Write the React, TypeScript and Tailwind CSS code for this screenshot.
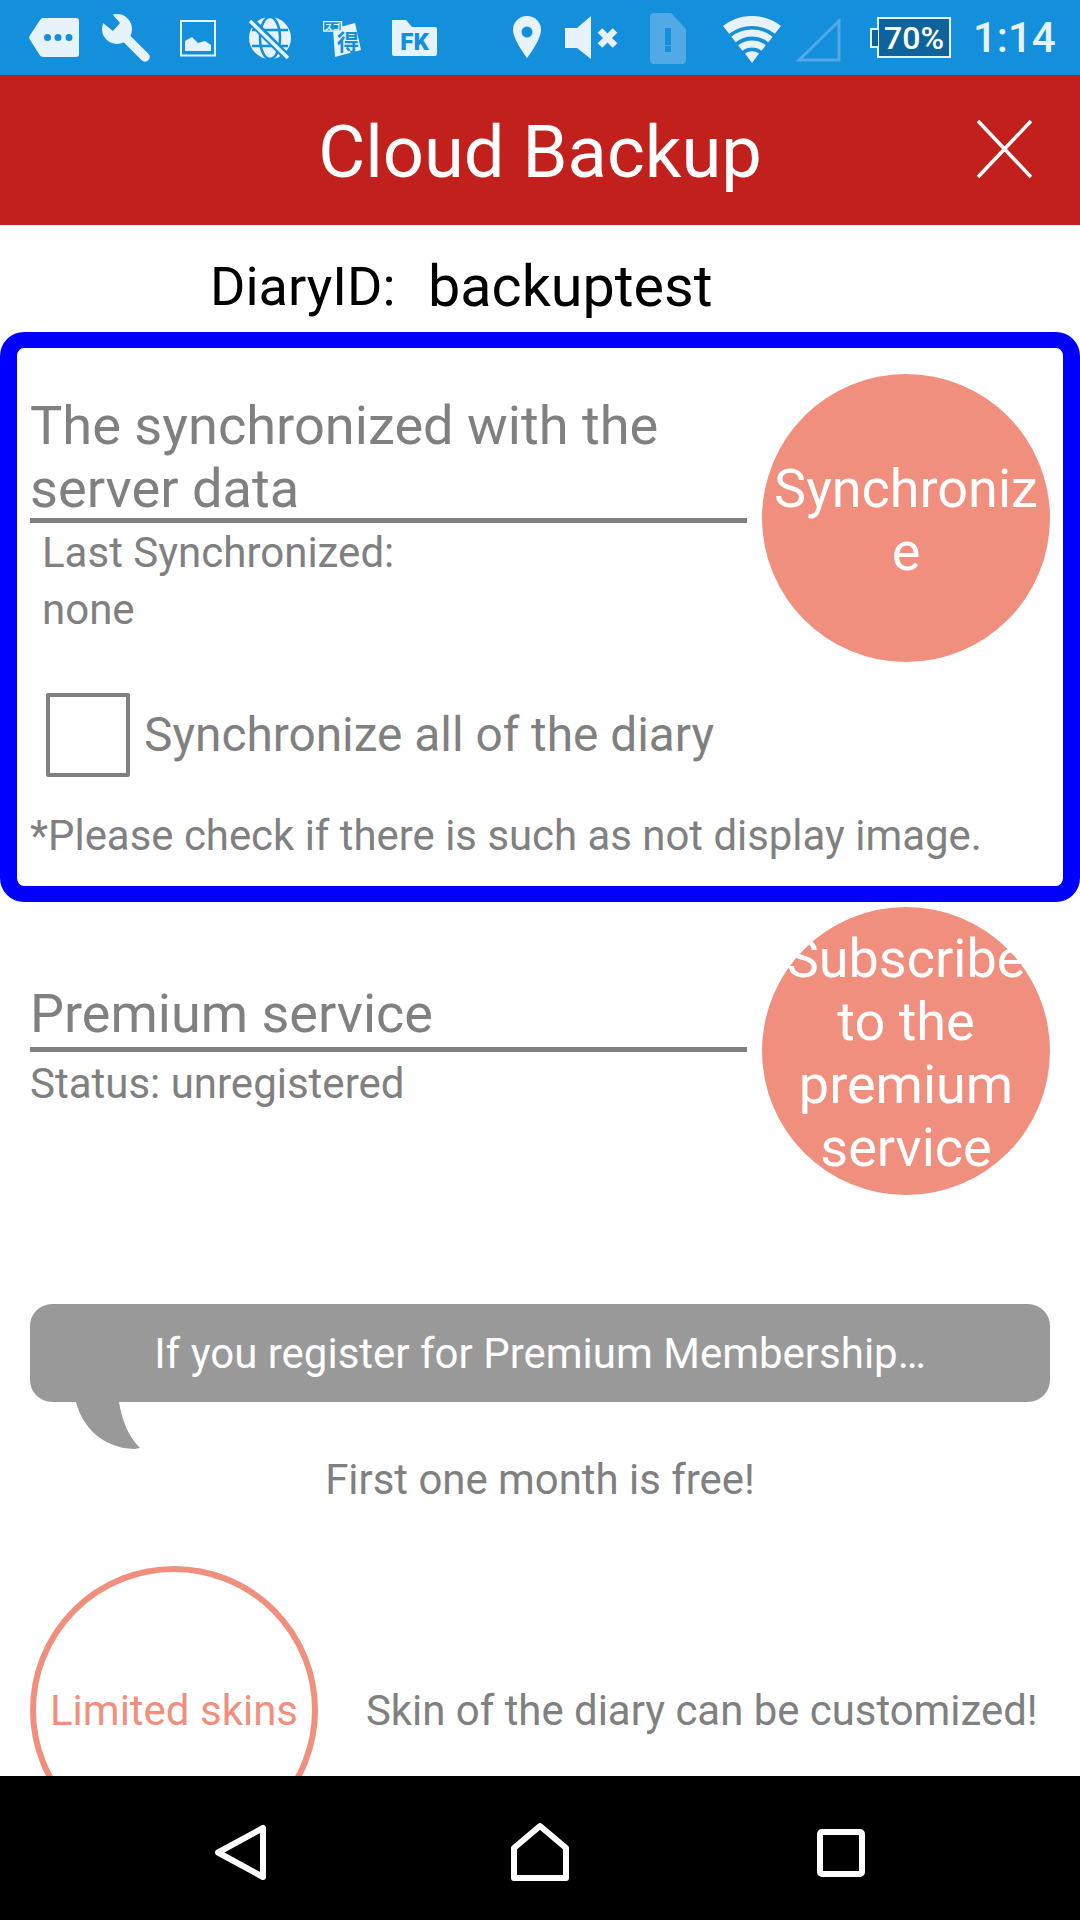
const ICON = "#e6f3fb";
const BAR = "#148fdc";
const DIM = "#52a9e5";

function StatusBar() {
  return (
    <div className="h-[75px] shrink-0 bg-[#148fdc] flex items-start relative">
      <svg className="w-[50px] h-[39px] ml-[29px] mt-[18px]" viewBox="29 18 50 39">
        <path fill={ICON} d="M43 18H76a3 3 0 0 1 3 3V54a3 3 0 0 1-3 3H43a4 4 0 0 1-3-1.500L29.500 39q-.5-1.500 0-3L40 20a4 4 0 0 1 3-2z" />
        <circle cx="47.500" cy="37.500" r="3.500" fill={BAR} />
        <circle cx="58" cy="37.500" r="3.500" fill={BAR} />
        <circle cx="69" cy="37.500" r="3.500" fill={BAR} />
      </svg>
      <svg className="w-[48px] h-[48px] ml-[23px] mt-[14px]" viewBox="102 14 48 48">
        <circle cx="117" cy="29" r="15" fill={ICON} />
        <path d="M124 36L145 57" stroke={ICON} strokeWidth="9.500" strokeLinecap="round" />
        <path fill={BAR} d="M108 9L120 23L113 31L99 20z" />
      </svg>
      <svg className="w-[36px] h-[37px] ml-[30px] mt-[20px]" viewBox="180 20 36 37">
        <rect x="181" y="21" width="34" height="34.500" fill="none" stroke={ICON} strokeWidth="2" />
        <path fill={ICON} d="M185 51V41L192 37L198 43L205 41L211 45V51z" />
      </svg>
      <svg className="w-[44px] h-[44px] ml-[33px] mt-[16px]" viewBox="249 16 44 44">
        <circle cx="270" cy="38" r="21" fill={ICON} />
        <g fill="none" stroke={BAR} strokeWidth="2.500">
          <ellipse cx="270" cy="38" rx="10" ry="21" />
          <path d="M252 30H288M252 46H288" />
        </g>
        <path d="M250 20L288 58" stroke={BAR} strokeWidth="8" />
        <path d="M250 21L288 58" stroke={ICON} strokeWidth="3.500" />
      </svg>
      <svg className="w-[39px] h-[37px] ml-[30px] mt-[21px]" viewBox="323 21 39 37">
        <path fill={ICON} d="M333 29L355 23L361 50L335 57z" />
        <rect x="323.500" y="21.500" width="18" height="9.500" fill={BAR} stroke={ICON} strokeWidth="1.500" />
        <text x="332.500" y="29.500" textAnchor="middle" fontSize="8" fontWeight="700" fill={ICON} fontFamily="'Noto Sans CJK JP', sans-serif">スゴ</text>
        <text x="348" y="50" textAnchor="middle" fontSize="22" fontWeight="700" fill={BAR} fontFamily="'Noto Sans CJK JP', sans-serif">得</text>
      </svg>
      <svg className="w-[46px] h-[37px] ml-[29px] mt-[20px]" viewBox="391 20 46 37">
        <path fill={ICON} d="M392 20H406L412 27H435a2 2 0 0 1 2 2V54a2 2 0 0 1-2 2H394a2 2 0 0 1-2-2z" />
        <text x="414.500" y="50" textAnchor="middle" fontSize="24" fontWeight="900" fill={BAR} fontFamily="Roboto, sans-serif">FK</text>
      </svg>
      <svg className="w-[28px] h-[43px] ml-[76px] mt-[16px]" viewBox="513 16 28 43">
        <path fill={ICON} d="M527 16a14 14 0 0 0-14 14c0 10 14 28 14 28s14-18 14-28a14 14 0 0 0-14-14z" />
        <circle cx="527" cy="32" r="5.500" fill={BAR} />
      </svg>
      <svg className="w-[53px] h-[44px] ml-[24px] mt-[16px]" viewBox="565 16 53 44">
        <path fill={ICON} d="M565 28H577L591 16V59L577 48H565z" />
        <path d="M600 30.500L615 45.500M615 30.500L600 45.500" stroke={ICON} strokeWidth="6.500" />
      </svg>
      <svg className="w-[36px] h-[51px] ml-[32px] mt-[13px]" viewBox="650 13 36 51">
        <path fill={DIM} d="M654 13H671L686 29V60a4 4 0 0 1-4 4H654a4 4 0 0 1-4-4V17a4 4 0 0 1 4-4z" />
        <path fill={BAR} d="M665 28H671V45H665zM665 46H671V52H665z" />
      </svg>
      <svg className="w-[58px] h-[47px] ml-[37px] mt-[16px]" viewBox="723 16 58 47">
        <g fill="none" stroke={ICON}>
          <path strokeWidth="10" d="M726.100 29.900A42 42 0 0 1 777.900 29.900" />
          <path strokeWidth="7" d="M733.500 39.400A30 30 0 0 1 770.500 39.400" />
          <path strokeWidth="7" d="M740.300 48A19 19 0 0 1 763.700 48" />
        </g>
        <path fill={ICON} d="M752 63L745 53.500A12 12 0 0 1 759 53.500z" />
      </svg>
      <svg className="w-[46px] h-[45px] ml-[14px] mt-[17px]" viewBox="795 17 46 45">
        <path fill="none" stroke={DIM} strokeWidth="3" d="M799 60L839 21V60z" />
      </svg>
      <div className="relative w-[74px] h-[41px] ml-[36px] mt-[17px] border-2 border-[#e6f3fb] bg-[#0e639c] flex items-center justify-center text-[32px] leading-none font-medium text-white font-['Roboto',sans-serif]">
        70%
        <span className="absolute left-[-9px] top-[9px] w-[8px] h-[20px] border-2 border-r-0 border-[#e6f3fb] bg-[#0e639c]" />
      </div>
      <div className="ml-[22px] h-[75px] flex items-center text-[42px] leading-none font-medium text-[#e6f3fb] font-['Roboto',sans-serif]">
        1:14
      </div>
    </div>
  );
}

function Header() {
  return (
    <div className="relative h-[150px] shrink-0 bg-[#c1201c] flex items-center justify-center pt-[7px] text-white text-[72.300px] leading-none">
      Cloud Backup
      <svg className="absolute left-[976px] top-[44px] w-[57px] h-[60px] blur-[0.5px]" viewBox="0 0 57 60">
        <path d="M2 2L55 58M55 2L2 58" stroke="#fff" strokeWidth="3.500" fill="none" />
      </svg>
    </div>
  );
}

function Circle({ children }: { children: React.ReactNode }) {
  return (
    <div className="w-[288px] h-[288px] shrink-0 rounded-full bg-[#f18f7f] flex items-center justify-center pt-[4px] text-center text-white text-[54px] leading-[63px] [overflow-wrap:anywhere]">
      <span className="w-full">{children}</span>
    </div>
  );
}

function NavBar() {
  return (
    <div className="h-[144px] shrink-0 bg-black flex items-start">
      <svg className="w-[56px] h-[62px] ml-[213px] mt-[46px]" viewBox="213 1822 56 62">
        <path d="M263 1828V1877L218 1852.500z" fill="none" stroke="#fff" strokeWidth="6" strokeLinejoin="round" />
      </svg>
      <svg className="w-[64px] h-[64px] ml-[239px] mt-[44px]" viewBox="508 1820 64 64">
        <path d="M540 1826L566 1848V1878H514V1848z" fill="none" stroke="#fff" strokeWidth="6" strokeLinejoin="round" />
      </svg>
      <svg className="w-[48px] h-[48px] ml-[245px] mt-[53px]" viewBox="0 0 48 48">
        <rect x="3" y="3" width="42" height="42" rx="2" fill="none" stroke="#fff" strokeWidth="6" />
      </svg>
    </div>
  );
}

export default function App() {
  return (
    <div className="w-[1080px] h-[1920px] flex flex-col overflow-hidden bg-white font-['Roboto',sans-serif] text-[#808080]">
      <StatusBar />
      <Header />
      <div className="flex-1 min-h-0 overflow-hidden">
        <div className="h-[107px] flex items-center pl-[210px] pt-[16px] text-black text-[54px] leading-none">
          <span className="w-[218px]">DiaryID:</span>
          <span className="text-[57.500px]">backuptest</span>
        </div>

        <div className="h-[570px] border-y-[16px] border-x-[17px] border-[#0000ff] rounded-[24px] pl-[13px] pr-[13px] flex flex-col">
          <div className="flex items-start pt-[26px]">
            <div className="flex-1 mr-[15px]">
              <div className="h-[149px] text-[54.200px] leading-[63px] border-b-[5px] border-[#808080] pt-[20px]">
                The synchronized with the server data
              </div>
              <div className="pl-[12px] text-[42px] leading-[57px] pt-[1px]">
                <div>Last Synchronized:</div>
                <div>none</div>
              </div>
            </div>
            <Circle>Synchronize</Circle>
          </div>
          <div className="flex items-center pl-[16px] mt-[31px]">
            <div className="w-[84px] h-[84px] border-4 border-[#808080] rounded-[2px] blur-[0.5px]" />
            <span className="ml-[14px] pt-[2px] text-[47.800px] leading-none">Synchronize all of the diary</span>
          </div>
          <div className="text-[41.900px] leading-none mt-[38px]">*Please check if there is such as not display image.</div>
        </div>

        <div className="flex items-start pl-[30px] pr-[30px] pt-[5px]">
          <div className="flex-1 mr-[15px] pt-[75px]">
            <div className="h-[70px] text-[54px] leading-[63px] border-b-[5px] border-[#808080]">Premium service</div>
            <div className="text-[42px] leading-[57px] pt-[3px]">Status: unregistered</div>
          </div>
          <Circle>Subscribe to the premium service</Circle>
        </div>

        <div className="relative mx-[30px] mt-[109px] h-[98px] rounded-[22px] bg-[#999999] flex items-center justify-center pt-[2px] text-white text-[42px] leading-none">
          If you register for Premium Membership…
          <svg className="absolute left-[46px] top-[98px] w-[66px] h-[48px]" viewBox="0 0 66 48">
            <path fill="#999999" d="M0 0C6 24 26 46 58 47L64 46C52 34 46 18 43 0z" />
          </svg>
        </div>
        <div className="mt-[57px] text-center text-[41.900px] leading-none">First one month is free!</div>

        <div className="flex items-center pl-[30px] mt-[65px]">
          <div className="w-[288px] h-[288px] shrink-0 rounded-full border-[6px] border-[#f18f7f] flex items-center justify-center pt-[3px] text-[#f18f7f] text-[42px] leading-none">
            Limited skins
          </div>
          <div className="ml-[48px] pt-[3px] text-[41.900px] leading-none">Skin of the diary can be customized!</div>
        </div>
      </div>
      <NavBar />
    </div>
  );
}
